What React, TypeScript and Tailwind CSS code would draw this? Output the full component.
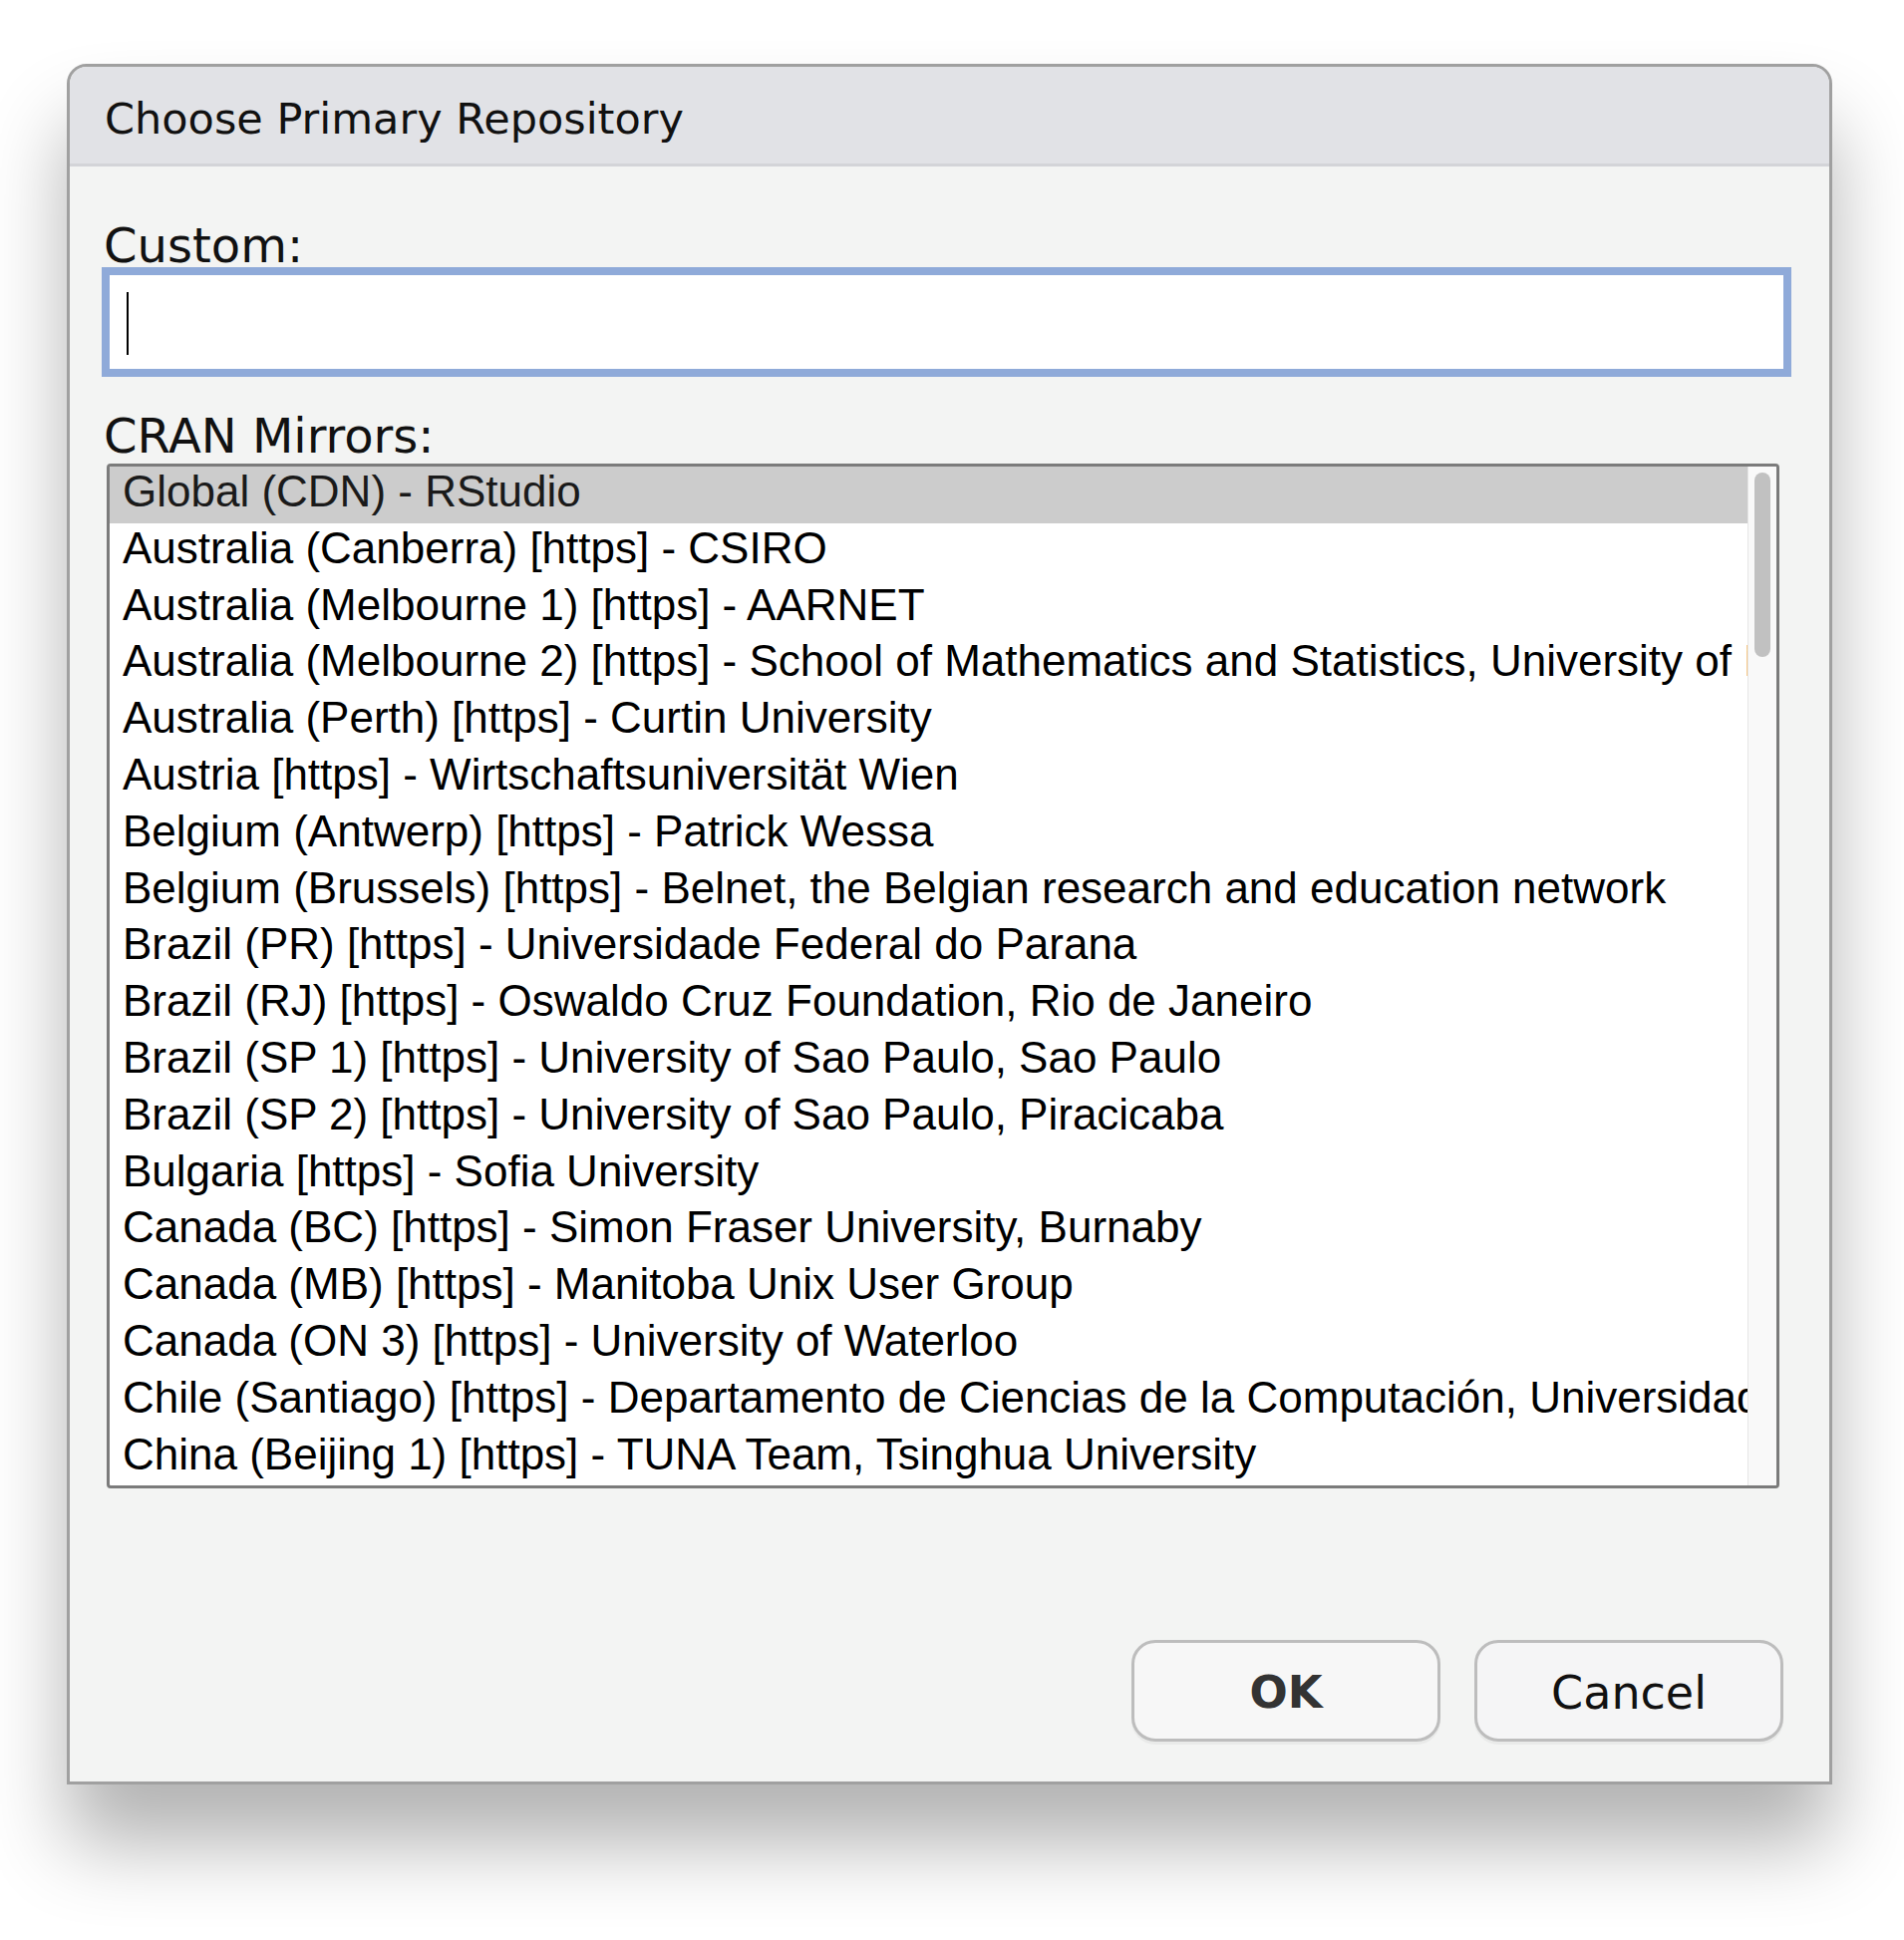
import React from "react";

const rows: string[] = [
  "Global (CDN) - RStudio",
  "Australia (Canberra) [https] - CSIRO",
  "Australia (Melbourne 1) [https] - AARNET",
  "Australia (Melbourne 2) [https] - School of Mathematics and Statistics, University of Melbourne",
  "Australia (Perth) [https] - Curtin University",
  "Austria [https] - Wirtschaftsuniversität Wien",
  "Belgium (Antwerp) [https] - Patrick Wessa",
  "Belgium (Brussels) [https] - Belnet, the Belgian research and education network",
  "Brazil (PR) [https] - Universidade Federal do Parana",
  "Brazil (RJ) [https] - Oswaldo Cruz Foundation, Rio de Janeiro",
  "Brazil (SP 1) [https] - University of Sao Paulo, Sao Paulo",
  "Brazil (SP 2) [https] - University of Sao Paulo, Piracicaba",
  "Bulgaria [https] - Sofia University",
  "Canada (BC) [https] - Simon Fraser University, Burnaby",
  "Canada (MB) [https] - Manitoba Unix User Group",
  "Canada (ON 3) [https] - University of Waterloo",
  "Chile (Santiago) [https] - Departamento de Ciencias de la Computación, Universidad de Chile",
  "China (Beijing 1) [https] - TUNA Team, Tsinghua University",
  "China (Hefei) [https] - University of Science and Technology of China",
  "China (Hong Kong) [https] - Bocheng Zhang",
];

export default function App() {
  return (
    <div className="h-[1946px] w-[1910px] bg-white pt-[64px] pl-[67px]">
      <div className="w-[1771px] border-[3px] border-[#a0a0a0] rounded-t-[20px] bg-[#f3f4f3] shadow-[0_60px_80px_rgba(0,0,0,0.3)] flex flex-col font-['DejaVu_Sans',sans-serif] text-black">
        {/* Title bar */}
        <div className="h-[100px] bg-[#e1e2e6] border-b-[3px] border-[#d3d4d8] rounded-t-[17px] pl-[35px] pt-[28px]">
          <div className="text-[43px] leading-[48px] text-[#111]">Choose Primary Repository</div>
        </div>

        {/* Body */}
        <div className="flex flex-col pl-[32px] pr-[35px] pt-[57px] pb-[40px]">
          <div className="text-[48px] leading-[44px] pl-[2px] text-[#111]">Custom:</div>
          <div className="mr-[3px] h-[110px] border-[8px] border-[#8faad9] bg-white pl-[17px] pt-[17px]">
            <div className="w-[2px] h-[63px] bg-black" />
          </div>

          <div className="mt-[37px] text-[48px] leading-[44px] pl-[2px] text-[#111]">CRAN Mirrors:</div>
          <div className="mt-[6px] ml-[5px] mr-[15px] h-[1028px] border-[3px] border-[#7b7b7b] rounded-[4px] bg-white flex overflow-hidden">
            <div className="flex-1 min-w-0 overflow-hidden font-['Liberation_Sans',Arial,sans-serif] text-[44px]">
              {rows.map((r, i) => (
                <div
                  key={i}
                  className={
                    i === 0
                      ? "h-[56.8px] leading-[49px] pl-[13px] whitespace-nowrap bg-[#cccccc] text-[#1a1a1a]"
                      : "h-[56.8px] leading-[49px] pl-[13px] whitespace-nowrap text-black"
                  }
                >
                  {r}
                </div>
              ))}
            </div>
            <div className="w-[29px] shrink-0 bg-[#f9f9f9] border-l border-[#e6e6e6] pt-[6px] pl-[6px]">
              <div className="w-[16px] h-[185px] rounded-full bg-[#c1c1c1]" />
            </div>
          </div>

          <div className="mt-[152px] mr-[11px] flex justify-end gap-[34px]">
            <button className="w-[310px] h-[102px] border-[3px] border-[#bdbdbd] rounded-[24px] bg-[#f7f7f7] shadow-[0_3px_0_rgba(0,0,0,0.04)] flex items-center justify-center pt-[4px] text-[45px] font-bold text-[#333]">
              OK
            </button>
            <button className="w-[310px] h-[102px] border-[3px] border-[#bdbdbd] rounded-[24px] bg-[#f5f5f6] shadow-[0_3px_0_rgba(0,0,0,0.04)] flex items-center justify-center pt-[4px] text-[46px] text-[#111]">
              Cancel
            </button>
          </div>
        </div>
      </div>
    </div>
  );
}
